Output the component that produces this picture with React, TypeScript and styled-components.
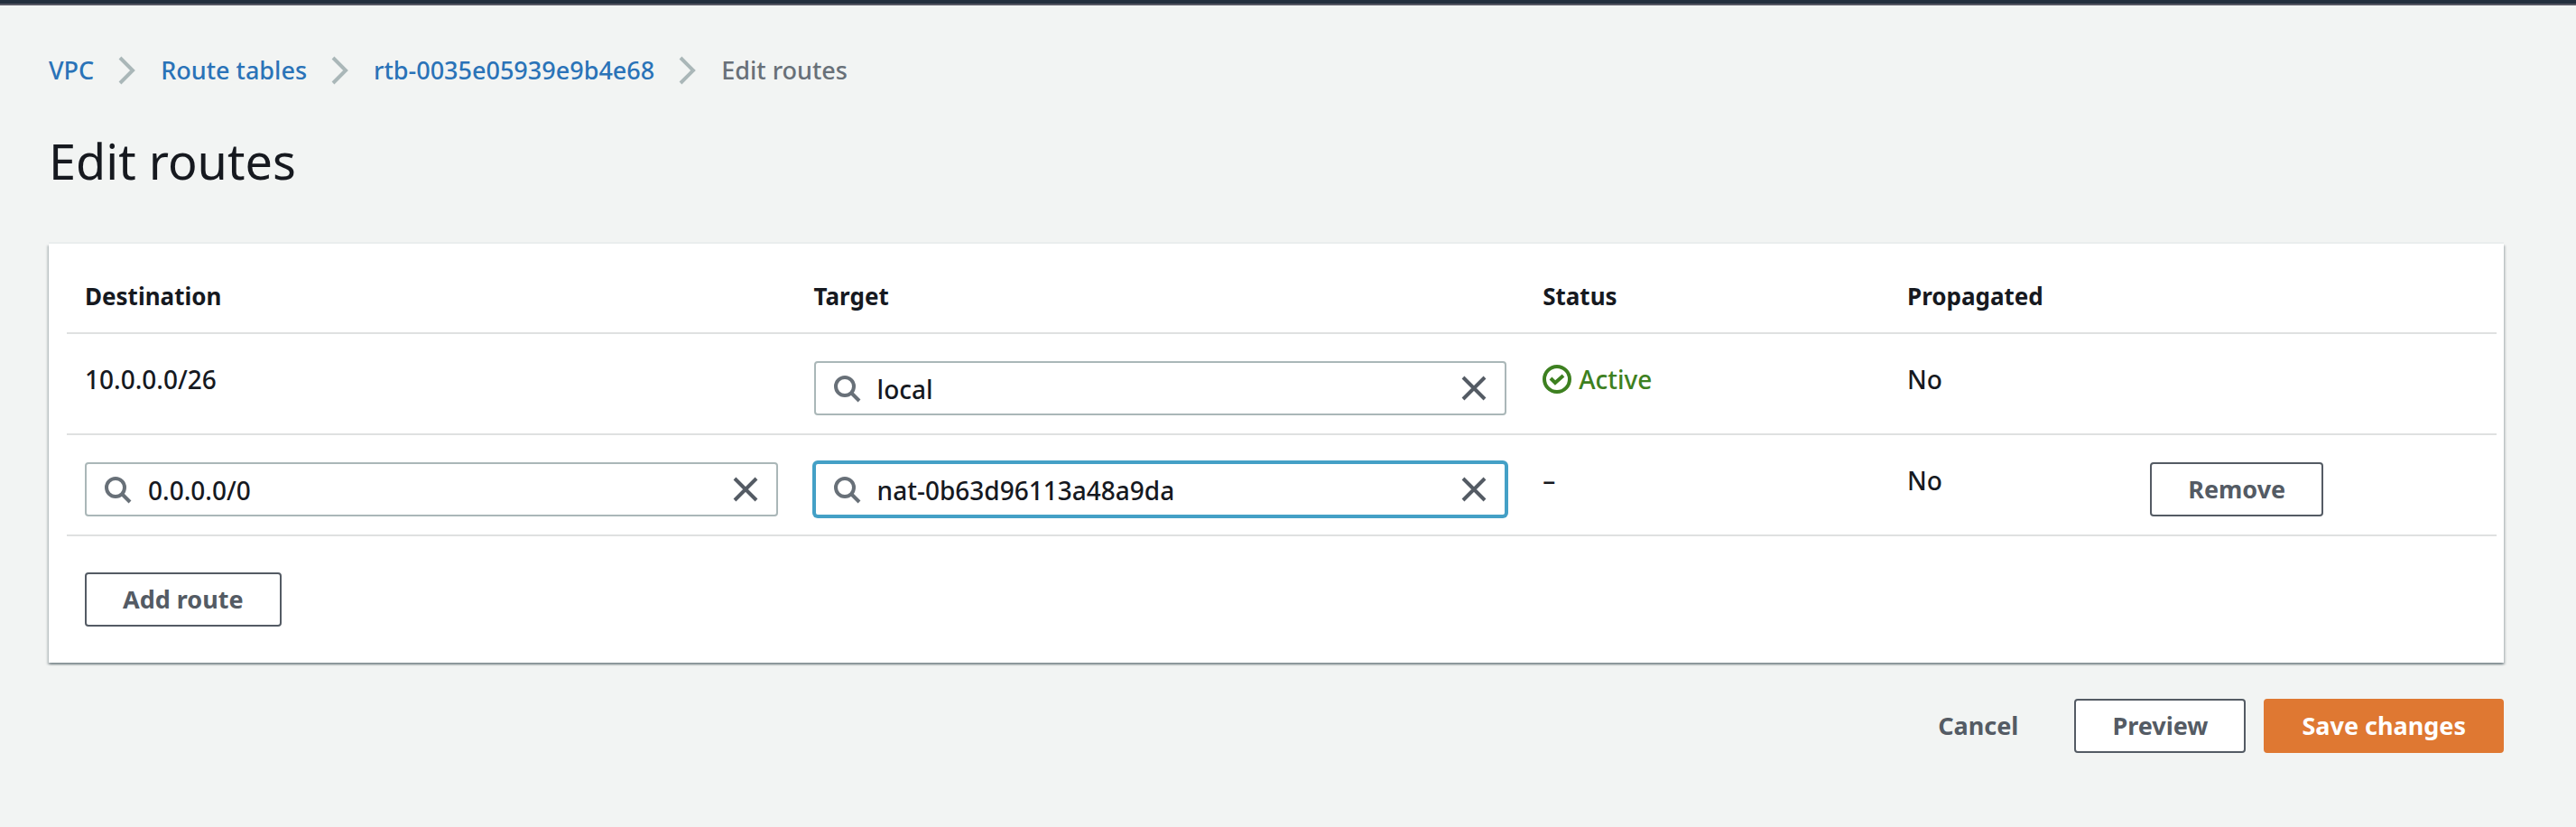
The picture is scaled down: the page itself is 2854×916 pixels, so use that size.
import React from "react";
import styled, { createGlobalStyle } from "styled-components";

const color = {
  text: "#16191f",
  muted: "#687078",
  control: "#545b64",
  link: "#2a73b8",
  border: "#aab7b8",
  divider: "#dfe1e1",
  focus: "#44a0c6",
  success: "#3d8020",
  primary: "#df7832",
  page: "#f2f4f3",
};

const GlobalStyle = createGlobalStyle`
  *, *::before, *::after { box-sizing: border-box; }
  body {
    margin: 0;
    background: ${color.page};
    color: ${color.text};
    font-family: "Noto Sans", "Open Sans", sans-serif;
    font-size: 27px;
    font-weight: 500;
    line-height: 40px;
  }
`;

const NavEdge = styled.header`
  height: 6px;
  background: #232f3e;
  border-bottom: 2px solid #565763;
`;

const Page = styled.main`
  padding: 52px 80px 60px 54px;
`;

const Crumbs = styled.ol`
  display: flex;
  align-items: center;
  margin: 0;
  padding: 0;
  list-style: none;
`;

const Crumb = styled.li`
  display: flex;
  align-items: center;
  color: ${color.muted};
`;

const CrumbLink = styled.a`
  color: ${color.link};
  text-decoration: none;
`;

const CrumbArrow = styled.svg`
  width: 20px;
  height: 32px;
  margin: 0 27px;
  fill: none;
  stroke: ${color.border};
  stroke-width: 4;
`;

const Title = styled.h1`
  margin: 44px 0 56px;
  font-size: 54px;
  line-height: 72px;
  font-weight: 400;
`;

const Card = styled.section`
  padding: 0 8px 40px 20px;
  background: #fff;
  box-shadow:
    0 -2px 0 0 #eaeded,
    0 2px 2px 0 rgba(0, 28, 36, 0.3),
    2px 2px 2px 0 rgba(0, 28, 36, 0.15),
    -2px 2px 2px 0 rgba(0, 28, 36, 0.15);
`;

const RoutesTable = styled.table`
  width: 100%;
  table-layout: fixed;
  border-collapse: separate;
  border-spacing: 0;
`;

const HeaderCell = styled.th<{ $width: number }>`
  width: ${(p) => p.$width}%;
  padding: 38px 20px 20px;
  border-bottom: 2px solid ${color.divider};
  font-size: 26px;
  font-weight: 700;
  text-align: left;
`;

const Cell = styled.td`
  padding: 30px 20px 20px;
  border-bottom: 2px solid ${color.divider};
  font-size: 28px;
  vertical-align: top;
`;

const Field = styled.div<{ $focused?: boolean }>`
  display: flex;
  align-items: center;
  height: 60px;
  padding: 0 18px;
  border: 2px solid ${(p) => (p.$focused ? color.focus : color.border)};
  border-radius: 4px;
  background: #fff;
  box-shadow: ${(p) => (p.$focused ? `0 0 0 2px ${color.focus}` : "none")};
`;

const FieldInput = styled.input`
  flex: 1;
  min-width: 0;
  height: 56px;
  padding: 2px 18px 0;
  border: 0;
  outline: 0;
  background: transparent;
  color: inherit;
  font: inherit;
`;

const Icon = styled.svg`
  flex: none;
  display: block;
  width: 32px;
  height: 32px;
  fill: none;
  stroke: currentColor;
  stroke-width: 4;
`;

const SearchIcon = styled(Icon)`
  color: ${color.muted};
`;

const ClearButton = styled.button`
  flex: none;
  padding: 0;
  border: 0;
  background: none;
  color: ${color.control};
  cursor: pointer;
`;

const Status = styled.span`
  display: flex;
  align-items: center;
  gap: 8px;
  color: ${color.success};
`;

const Button = styled.button<{ $variant?: "normal" | "link" | "primary" }>`
  display: block;
  height: 60px;
  padding: 0 40px;
  border: 2px solid
    ${(p) =>
      p.$variant === "primary"
        ? color.primary
        : p.$variant === "link"
          ? "transparent"
          : color.control};
  border-radius: 4px;
  background: ${(p) =>
    p.$variant === "primary"
      ? color.primary
      : p.$variant === "link"
        ? "transparent"
        : "#fff"};
  color: ${(p) => (p.$variant === "primary" ? "#fff" : color.control)};
  font-family: inherit;
  font-size: 27px;
  font-weight: 700;
  line-height: 40px;
  white-space: nowrap;
  cursor: pointer;
`;

const TableFooter = styled.div`
  padding: 40px 20px 0;
`;

const FormActions = styled.div`
  display: flex;
  justify-content: flex-end;
  gap: 20px;
  margin-top: 40px;
`;

function SearchField(props: { label: string; value: string; focused?: boolean }) {
  return (
    <Field $focused={props.focused}>
      <SearchIcon viewBox="0 0 32 32" aria-hidden="true">
        <circle cx="14" cy="14" r="10" />
        <path d="M21 21l9 9" />
      </SearchIcon>
      <FieldInput type="text" aria-label={props.label} defaultValue={props.value} />
      <ClearButton type="button" aria-label={`Clear ${props.label}`}>
        <Icon viewBox="0 0 32 32" aria-hidden="true">
          <path d="M4 4l24 24M28 4L4 28" />
        </Icon>
      </ClearButton>
    </Field>
  );
}

const columns = [
  { label: "Destination", width: 30 },
  { label: "Target", width: 30 },
  { label: "Status", width: 15 },
  { label: "Propagated", width: 10 },
  { label: "", width: 15 },
];

const parents = ["VPC", "Route tables", "rtb-0035e05939e9b4e68"];

export default function App() {
  return (
    <>
      <GlobalStyle />
      <NavEdge />
      <Page>
        <nav aria-label="Breadcrumbs">
          <Crumbs>
            {parents.map((name) => (
              <Crumb key={name}>
                <CrumbLink href="#">{name}</CrumbLink>
                <CrumbArrow viewBox="0 0 20 32" aria-hidden="true">
                  <path d="M2 2l14 14L2 30" />
                </CrumbArrow>
              </Crumb>
            ))}
            <Crumb aria-current="page">Edit routes</Crumb>
          </Crumbs>
        </nav>
        <Title>Edit routes</Title>
        <form onSubmit={(event) => event.preventDefault()}>
          <Card>
            <RoutesTable>
              <thead>
                <tr>
                  {columns.map((column) => (
                    <HeaderCell key={column.label} scope="col" $width={column.width}>
                      {column.label}
                    </HeaderCell>
                  ))}
                </tr>
              </thead>
              <tbody>
                <tr>
                  <Cell>10.0.0.0/26</Cell>
                  <Cell>
                    <SearchField label="Target for 10.0.0.0/26" value="local" />
                  </Cell>
                  <Cell>
                    <Status>
                      <Icon viewBox="0 0 32 32" aria-hidden="true">
                        <circle cx="16" cy="16" r="14" />
                        <path d="M9 15l5 5 9-8" />
                      </Icon>
                      Active
                    </Status>
                  </Cell>
                  <Cell>No</Cell>
                  <Cell />
                </tr>
                <tr>
                  <Cell>
                    <SearchField label="Destination" value="0.0.0.0/0" />
                  </Cell>
                  <Cell>
                    <SearchField
                      label="Target for 0.0.0.0/0"
                      value="nat-0b63d96113a48a9da"
                      focused
                    />
                  </Cell>
                  <Cell>–</Cell>
                  <Cell>No</Cell>
                  <Cell>
                    <Button type="button">Remove</Button>
                  </Cell>
                </tr>
              </tbody>
            </RoutesTable>
            <TableFooter>
              <Button type="button">Add route</Button>
            </TableFooter>
          </Card>
          <FormActions>
            <Button type="button" $variant="link">
              Cancel
            </Button>
            <Button type="button">Preview</Button>
            <Button type="submit" $variant="primary">
              Save changes
            </Button>
          </FormActions>
        </form>
      </Page>
    </>
  );
}
